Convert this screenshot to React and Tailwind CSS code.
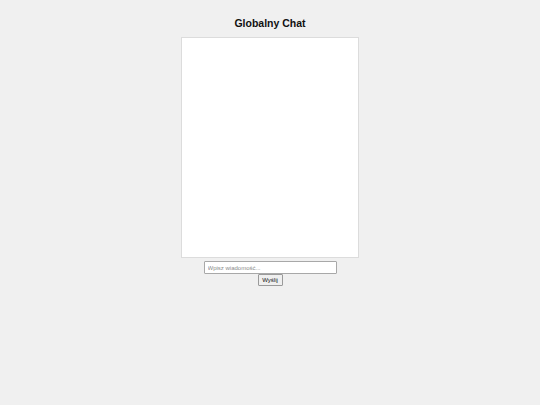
export default function App() {
  return (
    <div className="min-h-screen w-full bg-[#f0f0f0] flex flex-col items-center pt-[17px]" style={{ fontFamily: '"Liberation Sans", Arial, sans-serif' }}>
      <h1 className="text-[10.5px] font-bold leading-[12px] text-[#111]">Globalny Chat</h1>
      <div className="mt-[8px] w-[178px] h-[221px] bg-white border border-[#dcdcdc]"></div>
      <input
        className="mt-[3px] w-[133px] h-[13px] bg-white border border-[#a8a8a8] rounded-[1px] px-[3px] text-[6px] text-[#333] placeholder:text-[#8a8a8a] outline-none"
        placeholder="Wpisz wiadomość..."
      />
      <button className="mt-0 w-[25px] h-[12px] bg-[#efefef] border border-[#9a9a9a] rounded-[1px] text-[6px] text-[#111] leading-none flex items-center justify-center">
        Wyślij
      </button>
    </div>
  );
}
